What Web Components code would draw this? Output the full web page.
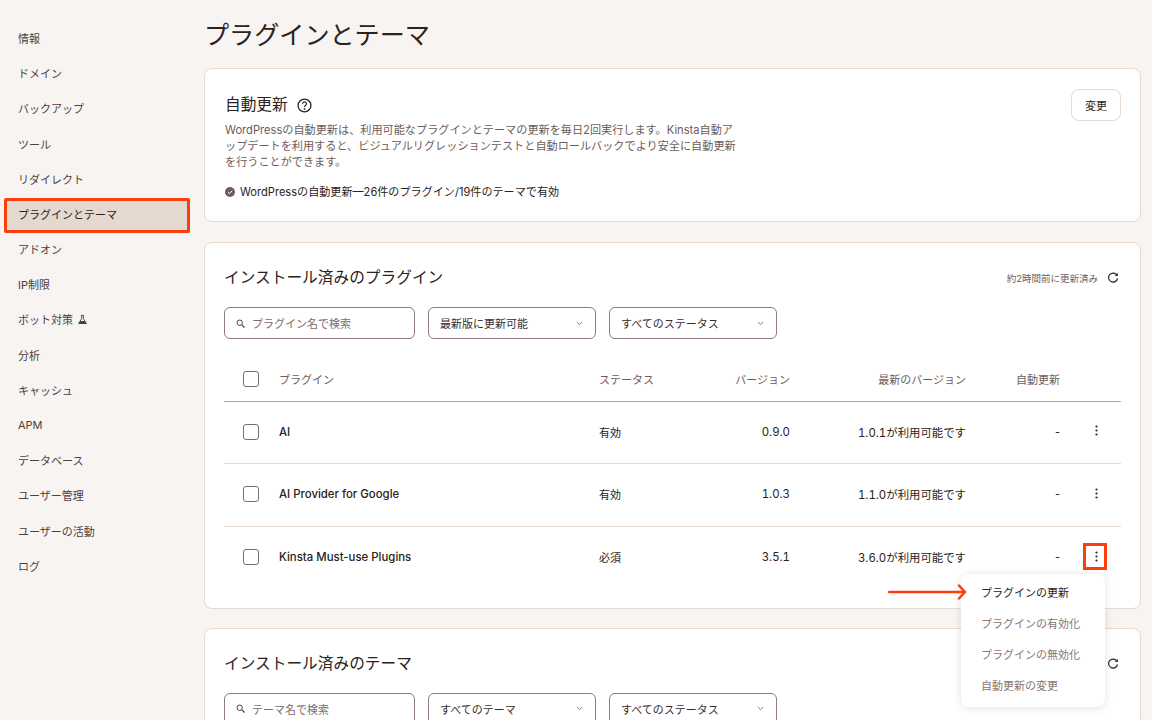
<!DOCTYPE html>
<html lang="ja">
<head>
<meta charset="utf-8">
<title>プラグインとテーマ</title>
<style>
  html, body { margin: 0; height: 720px; overflow: hidden; background: #f7f4f1; }
  body { display: flex; font-family: Inter, "Noto Sans CJK JP", sans-serif; color: #2b2220; }
</style>
</head>
<body>
<side-nav>
  <nav-link>情報</nav-link>
  <nav-link>ドメイン</nav-link>
  <nav-link>バックアップ</nav-link>
  <nav-link>ツール</nav-link>
  <nav-link>リダイレクト</nav-link>
  <nav-link active>プラグインとテーマ</nav-link>
  <nav-link>アドオン</nav-link>
  <nav-link>IP制限</nav-link>
  <nav-link>ボット対策 <svg width="11" height="11" viewBox="0 0 12 12" style="margin-left:1px;vertical-align:-1px"><path d="M4.500 1.500h3M5 1.500v3.600L1.800 10.300h8.400L7 5.100V1.500" fill="none" stroke="#4d3f3d"/><path d="M3.700 7.500h4.600l2.300 3.500H1.400z" fill="#4d3f3d"/></svg></nav-link>
  <nav-link>分析</nav-link>
  <nav-link>キャッシュ</nav-link>
  <nav-link>APM</nav-link>
  <nav-link>データベース</nav-link>
  <nav-link>ユーザー管理</nav-link>
  <nav-link>ユーザーの活動</nav-link>
  <nav-link>ログ</nav-link>
</side-nav>
<main-pane>
  <span slot="title">プラグインとテーマ</span>
  <update-card></update-card>
  <list-card heading="インストール済みのプラグイン" placeholder="プラグイン名で検索" first="最新版に更新可能">
    <table-head></table-head>
    <plugin-row name="AI" status="有効" version="0.9.0" latest="1.0.1が利用可能です"></plugin-row>
    <plugin-row name="AI Provider for Google" status="有効" version="1.0.3" latest="1.1.0が利用可能です"></plugin-row>
    <plugin-row name="Kinsta Must-use Plugins" status="必須" version="3.5.1" latest="3.6.0が利用可能です" open last></plugin-row>
  </list-card>
  <list-card heading="インストール済みのテーマ" placeholder="テーマ名で検索" first="すべてのテーマ" no-stamp></list-card>
</main-pane>

<script>
const refreshIcon = `<svg width="12" height="12" viewBox="0 0 12 12" fill="none"><path d="M10 3.300A4.500 4.500 0 1 0 10.500 6.500" stroke="#2b2220" stroke-width="1.200"/><path d="M10.800 .9v3H7.800z" fill="#2b2220"/></svg>`;

class SideNav extends HTMLElement {
  constructor() {
    super();
    this.attachShadow({ mode: 'open' });
    this.shadowRoot.innerHTML = `
      <style>
        :host { display: flex; flex-direction: column; flex: none; width: 204px; padding: 20.400px 15px 0 6px; box-sizing: border-box; }
      </style>
      <slot></slot>`;
  }
}
customElements.define('side-nav', SideNav);

class NavLink extends HTMLElement {
  constructor() {
    super();
    this.attachShadow({ mode: 'open' });
    this.shadowRoot.innerHTML = `
      <style>
        :host { display: flex; align-items: center; flex: none; height: 35.200px; padding-left: 12px; box-sizing: border-box; font-size: 11px; color: #4d3f3d; white-space: pre; }
        :host([active]) { margin: 1.200px -1px -1.200px -2px; padding: 0 0 2px 11px; background: #e5d8ce; border: 3px solid #fb3f0c; border-radius: 2px; color: #2b2220; }
      </style>
      <slot></slot>`;
  }
}
customElements.define('nav-link', NavLink);

class MainPane extends HTMLElement {
  constructor() {
    super();
    this.attachShadow({ mode: 'open' });
    this.shadowRoot.innerHTML = `
      <style>
        :host { display: flex; flex-direction: column; flex: none; width: 937px; gap: 20px; }
        ::slotted(*) { flex: none; }
        h1 { flex: none; margin: 0; height: 48px; box-sizing: border-box; padding-top: 16px; font-size: 25.100px; line-height: 38px; font-weight: 400; color: #2b2220; }
      </style>
      <h1><slot name="title"></slot></h1>
      <slot></slot>`;
  }
}
customElements.define('main-pane', MainPane);

class UpdateCard extends HTMLElement {
  constructor() {
    super();
    this.attachShadow({ mode: 'open' });
    this.shadowRoot.innerHTML = `
      <style>
        :host { display: block; height: 154px; box-sizing: border-box; position: relative; background: #fff; border: 1px solid #e7dacf; border-radius: 8px; padding: 25px 19px 0 20px; }
        h2 { display: flex; align-items: center; gap: 9px; margin: 0; font-size: 15.700px; line-height: 22px; font-weight: 400; }
        p { margin: 6px 0 0; width: 516px; font-size: 11.150px; line-height: 16px; color: #6e5c5a; }
        .state { display: flex; align-items: center; gap: 5px; margin-top: 14px; font-size: 11.100px; line-height: 16px; }
        button { position: absolute; top: 20px; right: 19px; width: 50px; height: 32px; background: #fff; border: 1px solid #e7dacf; border-radius: 8px; font: inherit; font-size: 11px; color: #2b2220; padding: 0; }
      </style>
      <h2>自動更新
        <svg width="15" height="15" viewBox="0 0 14 14" fill="none"><circle cx="7" cy="7" r="6" stroke="#2b2220" stroke-width="1.200"/><path d="M5.200 5.400a1.800 1.800 0 1 1 2.700 1.600c-.6.400-.9.700-.9 1.300" stroke="#2b2220" stroke-width="1.100"/><circle cx="7" cy="10.200" r=".8" fill="#2b2220"/></svg>
      </h2>
      <p>WordPressの自動更新は、利用可能なプラグインとテーマの更新を毎日2回実行します。Kinsta自動アップデートを利用すると、ビジュアルリグレッションテストと自動ロールバックでより安全に自動更新を行うことができます。</p>
      <div class="state">
        <svg width="10" height="10" viewBox="0 0 10 10"><circle cx="5" cy="5" r="5" fill="#6e5c5a"/><path d="M2.800 5.100l1.600 1.500 2.800-3" fill="none" stroke="#fff" stroke-width="1"/></svg>
        <span>WordPressの自動更新—26件のプラグイン/19件のテーマで有効</span>
      </div>
      <button>変更</button>`;
  }
}
customElements.define('update-card', UpdateCard);

class FilterBox extends HTMLElement {
  constructor() {
    super();
    this.attachShadow({ mode: 'open' });
    const search = this.hasAttribute('search');
    this.shadowRoot.innerHTML = `
      <style>
        :host { display: flex; align-items: center; justify-content: space-between; height: 32px; box-sizing: border-box; border: 1px solid #8f7b77; border-radius: 6px; padding: 0 12px 0 11px; font-size: 11px; background: #fff; color: #3a2e2c; }
        :host([search]) { justify-content: flex-start; gap: 7px; padding: 0 11px; color: #7d6b68; }
      </style>
      ${search ? `<svg width="9" height="9" viewBox="0 0 9 9" fill="none"><circle cx="3.700" cy="3.700" r="2.700" stroke="#4d3f3d"/><path d="M5.800 5.800L8.500 8.500" stroke="#4d3f3d" stroke-width="1.200"/></svg>` : ''}
      <span>${this.getAttribute('label')}</span>
      ${search ? '' : `<svg width="7" height="5" viewBox="0 0 7 5" fill="none"><path d="M.8 1l2.700 2.700L6.200 1" stroke="#7d6b68" stroke-width=".9"/></svg>`}`;
  }
}
customElements.define('filter-box', FilterBox);

class ListCard extends HTMLElement {
  constructor() {
    super();
    this.attachShadow({ mode: 'open' });
    this.shadowRoot.innerHTML = `
      <style>
        :host { display: block; box-sizing: border-box; background: #fff; border: 1px solid #e7dacf; border-radius: 8px; padding: 24px 19px 0 19px; }
        :host([no-stamp]) { margin-top: -1px; }
        header { display: flex; align-items: center; justify-content: space-between; height: 22px; }
        h2 { margin: 0; font-size: 15.700px; line-height: 22px; font-weight: 400; }
        .stamp { display: flex; align-items: center; gap: 9px; font-size: 9.500px; color: #6e5c5a; padding-right: 2px; }
        .filters { display: grid; grid-template-columns: 191px 168px 168px; gap: 13px; margin-top: 18px; }
      </style>
      <header>
        <h2>${this.getAttribute('heading')}</h2>
        <span class="stamp">${this.hasAttribute('no-stamp') ? '' : '<span>約2時間前に更新済み</span>'}${refreshIcon}</span>
      </header>
      <div class="filters">
        <filter-box search label="${this.getAttribute('placeholder')}"></filter-box>
        <filter-box label="${this.getAttribute('first')}"></filter-box>
        <filter-box label="すべてのステータス"></filter-box>
      </div>
      <slot></slot>`;
  }
}
customElements.define('list-card', ListCard);

const columns = `grid-template-columns: 19px 36px 320px 80px 111px 176px 94px 1fr;`;

class TableHead extends HTMLElement {
  constructor() {
    super();
    this.attachShadow({ mode: 'open' });
    this.shadowRoot.innerHTML = `
      <style>
        :host { display: grid; ${columns} align-items: center; height: 45px; margin-top: 17px; border-bottom: 1px solid #b3a4a0; font-size: 11px; color: #6e5c5a; }
        i { display: block; width: 14px; height: 14px; border: 1px solid #7d6b68; border-radius: 3px; }
        .r { text-align: right; }
      </style>
      <span></span><i></i>
      <span>プラグイン</span><span>ステータス</span>
      <span class="r">バージョン</span><span class="r">最新のバージョン</span><span class="r">自動更新</span><span></span>`;
  }
}
customElements.define('table-head', TableHead);

class PluginRow extends HTMLElement {
  constructor() {
    super();
    this.attachShadow({ mode: 'open' });
    const open = this.hasAttribute('open');
    this.shadowRoot.innerHTML = `
      <style>
        :host { display: grid; ${columns} align-items: center; height: 59.500px; padding-bottom: 1.500px; border-bottom: 1px solid #e7dacf; font-size: 11px; color: #2b2220; position: relative; }
        :host(:nth-child(3)) { height: 60px; padding-bottom: 2px; }
        :host([last]) { border-bottom: 0; height: 80.500px; padding-bottom: 20.500px; box-sizing: border-box; }
        i { display: block; width: 14px; height: 14px; border: 1px solid #7d6b68; border-radius: 3px; }
        .r { text-align: right; }
        .n { font-size: 11.400px; font-feature-settings: "tnum"; }
        b { font-weight: 500; font-size: 11.400px; }
        .more { justify-self: end; display: flex; justify-content: center; align-items: center; width: 18px; height: 21px; margin: 0 16px 2px 0; }
        .more.on { outline: 3px solid #fb3f0c; margin-right: 17px; }
        .more.on svg { margin-left: 2px; }
      </style>
      <span></span><i></i>
      <b>${this.getAttribute('name')}</b><span>${this.getAttribute('status')}</span>
      <span class="r n">${this.getAttribute('version')}</span><span class="r n">${this.getAttribute('latest')}</span><span class="r">-</span>
      <span class="more${open ? ' on' : ''}"><svg width="3" height="11" viewBox="0 0 3 11" fill="#2b2220"><circle cx="1.500" cy="1.500" r="1.100"/><circle cx="1.500" cy="5.500" r="1.100"/><circle cx="1.500" cy="9.500" r="1.100"/></svg></span>
      ${open ? `<row-menu></row-menu>` : ''}`;
  }
}
customElements.define('plugin-row', PluginRow);

class RowMenu extends HTMLElement {
  constructor() {
    super();
    this.attachShadow({ mode: 'open' });
    this.shadowRoot.innerHTML = `
      <style>
        :host { display: flex; flex-direction: column; position: absolute; z-index: 3; top: 47px; right: 16px; width: 144px; height: 133px; box-sizing: border-box; padding: 3px 0 7px; background: #fff; border-radius: 8px; box-shadow: 0 1px 8px rgba(70, 50, 40, .14); font-size: 11px; color: #8a7672; }
        span { flex: 1; display: flex; align-items: center; padding-left: 20px; }
        span:first-of-type { color: #2b2220; }
        svg { position: absolute; left: -73px; top: 10px; }
      </style>
      <svg width="80" height="16" viewBox="0 0 80 16" fill="none"><path d="M1 8H77M71 1.500L77 8L71 14.500" stroke="#fb3f0c" stroke-width="2.500" stroke-linecap="round" stroke-linejoin="round"/></svg>
      <span>プラグインの更新</span><span>プラグインの有効化</span><span>プラグインの無効化</span><span>自動更新の変更</span>`;
  }
}
customElements.define('row-menu', RowMenu);
</script>
</body>
</html>
